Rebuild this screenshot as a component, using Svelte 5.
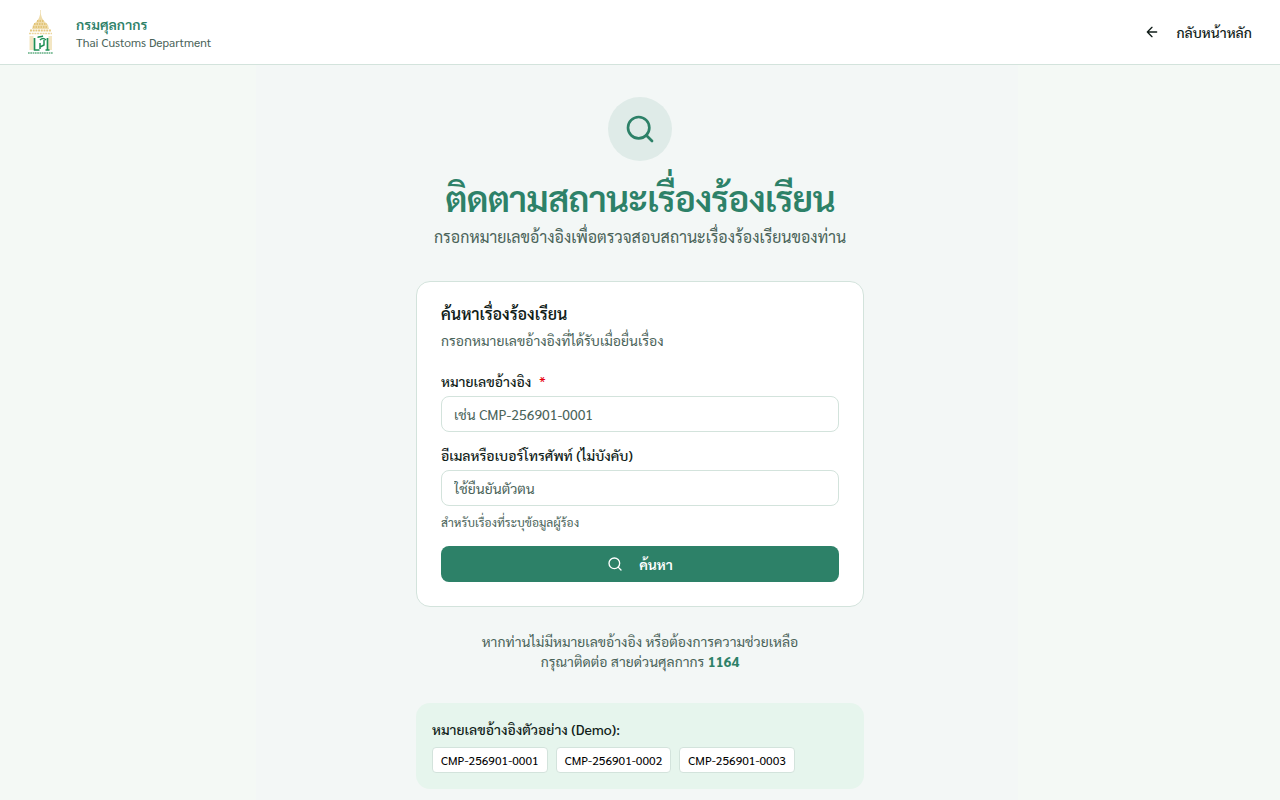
<script>
  const demoIds = ['CMP-256901-0001', 'CMP-256901-0002', 'CMP-256901-0003'];

  let reference = $state('');
  let contact = $state('');

  function pick(id) {
    reference = id;
  }
</script>

<div class="page">
  <header>
    <div class="brand">
      <svg class="logo" viewBox="0 0 48 48" width="48" height="48" fill="none">
        <path d="M24.500 2v6" stroke="#f2e6c6" stroke-width="1" />
        <path d="M24.500 5l1.500 5 2 3 4 4 1 4H16l1-4 4-4 2-3z" fill="#efdcaa" />
        <path d="M21 13h7M18 16h13M17 19h15" stroke="#e2c478" stroke-dasharray="1.500 1" />
        <path d="M14 22.500h21" stroke="#e5c880" stroke-width="2" stroke-dasharray="2 .7" />
        <path d="M13 25.500h23" stroke="#ecd59b" stroke-width="1.500" stroke-dasharray="2 .7" />
        <path d="M14.500 28v14M35 28v14M16.500 28v14M33.500 28v14" stroke="#f3e6c3" />
        <path d="M18.500 30v12h5M31.500 30v12M29.500 42h4" stroke="#1f9055" stroke-width="1.700" />
        <path d="M21.500 29.500c1.500-1 3-.5 5.500-1.500M24 32c2-2 4-2 6 0M28 32v5l-4 2M24 35v6" stroke="#1f9055" stroke-width="1.500" />
        <path d="M12 45h25" stroke="#62ae83" stroke-width="1.500" stroke-dasharray="1.700 .6" />
      </svg>
      <div class="names">
        <span class="name-th">กรมศุลกากร</span>
        <span class="name-en">Thai Customs Department</span>
      </div>
    </div>
    <button class="back">
      <svg viewBox="0 0 24 24" width="16" height="16"><path d="m12 19-7-7 7-7M19 12H5" /></svg>
      <span>กลับหน้าหลัก</span>
    </button>
  </header>

  <main>
    <section class="intro">
      <div class="badge">
        <svg viewBox="0 0 24 24" width="32" height="32"><circle cx="11" cy="11" r="8" /><path d="m21 21-4.300-4.300" /></svg>
      </div>
      <h1>ติดตามสถานะเรื่องร้องเรียน</h1>
      <p>กรอกหมายเลขอ้างอิงเพื่อตรวจสอบสถานะเรื่องร้องเรียนของท่าน</p>
    </section>

    <section class="card">
      <h2>ค้นหาเรื่องร้องเรียน</h2>
      <p class="desc">กรอกหมายเลขอ้างอิงที่ได้รับเมื่อยื่นเรื่อง</p>

      <label for="ref">หมายเลขอ้างอิง <span class="req">*</span></label>
      <input id="ref" placeholder="เช่น CMP-256901-0001" bind:value={reference} />

      <label for="contact">อีเมลหรือเบอร์โทรศัพท์ (ไม่บังคับ)</label>
      <input id="contact" placeholder="ใช้ยืนยันตัวตน" bind:value={contact} />
      <p class="hint">สำหรับเรื่องที่ระบุข้อมูลผู้ร้อง</p>

      <button class="submit">
        <svg viewBox="0 0 24 24" width="16" height="16"><circle cx="11" cy="11" r="8" /><path d="m21 21-4.300-4.300" /></svg>
        <span>ค้นหา</span>
      </button>
    </section>

    <div class="help">
      <p>หากท่านไม่มีหมายเลขอ้างอิง หรือต้องการความช่วยเหลือ</p>
      <p>กรุณาติดต่อ สายด่วนศุลกากร <a href="tel:1164">1164</a></p>
    </div>

    <section class="demo">
      <p>หมายเลขอ้างอิงตัวอย่าง (Demo):</p>
      <div class="chips">
        {#each demoIds as id}
          <button onclick={() => pick(id)}>{id}</button>
        {/each}
      </div>
    </section>
  </main>
</div>

<style>
  :global(body) {
    margin: 0;
    overflow: hidden;
  }
  .page, button, input {
    font-family: Sarabun, "TH Sarabun New", "Noto Sans Thai Looped", Laksaman, Loma, Garuda, Waree, "Noto Sans", sans-serif;
  }
  .page {
    height: 800px;
    overflow: hidden;
    font-size: 14px;
    line-height: 20px;
    color: #111d19;
    background: linear-gradient(to right, #f4f9f5 20%, #f3f7f6 20%, #f3f7f6 79.500%, #f4f9f5 79.500%);
  }
  * {
    box-sizing: border-box;
  }
  p, h1, h2 {
    margin: 0;
  }
  svg {
    flex: none;
    fill: none;
    stroke: currentColor;
    stroke-width: 2;
    stroke-linecap: round;
    stroke-linejoin: round;
  }
  .logo {
    stroke: none;
    stroke-linecap: butt;
  }
  header {
    height: 65px;
    display: flex;
    align-items: center;
    justify-content: space-between;
    padding: 0 28px 0 16px;
    background: #fff;
    border-bottom: 1px solid #d3e3dc;
  }
  .brand {
    display: flex;
    gap: 12px;
    align-items: center;
  }
  .names {
    display: flex;
    flex-direction: column;
  }
  .name-th {
    color: #2d8168;
    font-weight: 600;
  }
  .name-en {
    color: #4a6359;
    font-size: 12px;
    line-height: 16px;
  }
  .back {
    display: flex;
    align-items: center;
    gap: 16px;
    border: 0;
    padding: 0;
    background: none;
    color: inherit;
    font-size: 14px;
    font-weight: 500;
  }
  main {
    width: 448px;
    margin: 0 auto;
    padding-top: 32px;
  }
  .intro {
    text-align: center;
    white-space: nowrap;
  }
  .badge {
    width: 64px;
    height: 64px;
    margin: 0 auto 16px;
    border-radius: 50%;
    display: flex;
    align-items: center;
    justify-content: center;
    background: #dfebe8;
    color: #2d8168;
  }
  h1 {
    font-size: 36px;
    line-height: 40px;
    font-weight: 600;
    letter-spacing: -0.025em;
    margin-bottom: 8px;
    color: #2d8168;
  }
  .intro p {
    font-size: 16px;
    line-height: 24px;
    color: #4a6359;
  }
  .card {
    margin-top: 32px;
    height: 326px;
    padding: 24px;
    border: 1px solid #d3e3dc;
    border-radius: 14px;
    background: #fff;
  }
  h2 {
    font-size: 16px;
    line-height: 16px;
    font-weight: 600;
  }
  .desc {
    margin: 8px 0 24px;
    color: #4a6359;
  }
  label {
    display: flex;
    gap: 8px;
    margin-bottom: 8px;
    line-height: 14px;
    font-weight: 500;
  }
  .req {
    color: #e7000b;
  }
  input {
    display: block;
    width: 100%;
    height: 36px;
    margin-bottom: 16px;
    padding: 0 12px;
    border: 1px solid #d3e3dc;
    border-radius: 8px;
    font-size: 14px;
    background: #fff;
  }
  input::placeholder {
    color: #4a6359;
  }
  .hint {
    margin: -8px 0 16px;
    font-size: 12px;
    line-height: 16px;
    color: #4a6359;
  }
  .submit {
    width: 100%;
    height: 36px;
    display: flex;
    align-items: center;
    justify-content: center;
    gap: 16px;
    border: 0;
    border-radius: 8px;
    background: #2d8168;
    color: #fff;
    font-size: 14px;
    font-weight: 600;
  }
  .help {
    margin-top: 24px;
    text-align: center;
    color: #4a6359;
  }
  .help a {
    color: #2d8168;
    font-weight: 700;
    text-decoration: none;
  }
  .demo {
    margin-top: 32px;
    height: 86px;
    padding: 16px;
    border-radius: 14px;
    background: #e6f5ed;
    font-weight: 500;
  }
  .chips {
    display: flex;
    gap: 8px;
    margin-top: 8px;
  }
  .chips button {
    height: 26px;
    padding: 0 8px;
    border: 1px solid #d3e3dc;
    border-radius: 4px;
    background: #fff;
    font-size: 12px;
  }
</style>
